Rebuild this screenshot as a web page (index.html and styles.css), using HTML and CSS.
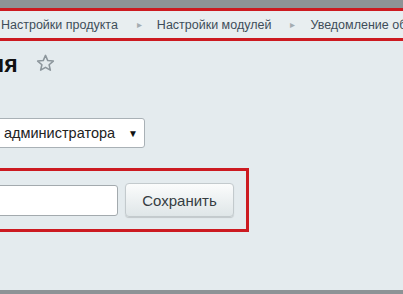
FILE: index.html
```html
<!DOCTYPE html>
<html lang="ru">
<head>
    <meta charset="UTF-8">
    <meta name="viewport" content="width=device-width, initial-scale=1.0">
    <title>Уведомление</title>
    <link rel="stylesheet" href="styles.css">
</head>
<body>
    <div class="top-bar"></div>
    <nav class="breadcrumbs">
        <a href="#">Настройки продукта</a>
        <span class="crumb-arrow">&#9656;</span>
        <a href="#">Настройки модулей</a>
        <span class="crumb-arrow">&#9656;</span>
        <a href="#">Уведомление об изменениях</a>
    </nav>

    <main class="content">
        <div class="title-row">
            <h1>ия</h1>
            <svg class="star" width="19" height="18" viewBox="0 0 24 23">
                <path d="M12 1.8l2.9 6.6 7.1.6-5.4 4.7 1.6 7-6.2-3.7-6.2 3.7 1.6-7L2 9l7.1-.6z" fill="none" stroke="#8c969c" stroke-width="2" stroke-linejoin="round"/>
            </svg>
        </div>

        <div class="select-box">
            <span class="select-text">администратора</span>
            <span class="select-arrow">&#9660;</span>
        </div>

        <div class="save-box">
            <input type="text" class="email-input">
            <button class="save-btn">Сохранить</button>
        </div>
    </main>

    <div class="bottom-bar"></div>
</body>
</html>
```

FILE: styles.css
```css
body {
    margin: 0;
    height: 294px;
    overflow: hidden;
    background-color: #e4ebee;
    font-family: "Liberation Sans", Arial, sans-serif;
    display: flex;
    flex-direction: column;
}
.top-bar {
    height: 8px;
    background-color: #8d9396;
}
.breadcrumbs {
    height: 27px;
    display: flex;
    align-items: center;
    white-space: nowrap;
    padding-left: 1px;
    background-color: #e8eef0;
    border-top: 3px solid #cc1a20;
    border-bottom: 3px solid #cc1a20;
    font-size: 12.5px;
}
.breadcrumbs a {
    color: #3e4d59;
    text-decoration: none;
}
.crumb-arrow {
    color: #a4acb1;
    font-size: 10px;
    margin: 0 15px 0 19px;
}
.content {
    flex: 1;
    overflow: hidden;
}
.title-row {
    display: flex;
    align-items: center;
    height: 24px;
    margin-top: 11px;
}
.title-row h1 {
    margin: 0 0 0 -10px;
    font-size: 23px;
    font-weight: bold;
    color: #111;
}
.star {
    margin-left: 18px;
    margin-top: -3px;
}
.select-box {
    width: 156px;
    height: 30px;
    box-sizing: border-box;
    margin: 42px 0 0 -11px;
    display: flex;
    align-items: center;
    justify-content: space-between;
    padding: 0 6px 0 14px;
    background-color: #fff;
    border: 1px solid #a9b1b6;
    border-radius: 3px;
    font-size: 14.5px;
    color: #222;
}
.select-arrow {
    font-size: 10px;
    color: #111;
}
.save-box {
    width: 260px;
    height: 64px;
    box-sizing: border-box;
    margin: 20px 0 0 -11px;
    display: flex;
    align-items: center;
    gap: 7px;
    border: 3px solid #cc1a20;
}
.email-input {
    width: 129px;
    height: 31px;
    box-sizing: border-box;
    margin-left: -3px;
    border: 1px solid #a3aaae;
    border-radius: 3px;
    background-color: #fff;
}
.save-btn {
    width: 109px;
    height: 34px;
    border: 1px solid #c3cacd;
    border-radius: 4px;
    background: linear-gradient(#fbfcfc, #dfe6e8);
    box-shadow: 0 1px 1px rgba(0, 0, 0, 0.15);
    font-family: "Liberation Sans", Arial, sans-serif;
    font-size: 15px;
    color: #353d42;
}
.bottom-bar {
    height: 4px;
    background-color: #8d9396;
}
```
